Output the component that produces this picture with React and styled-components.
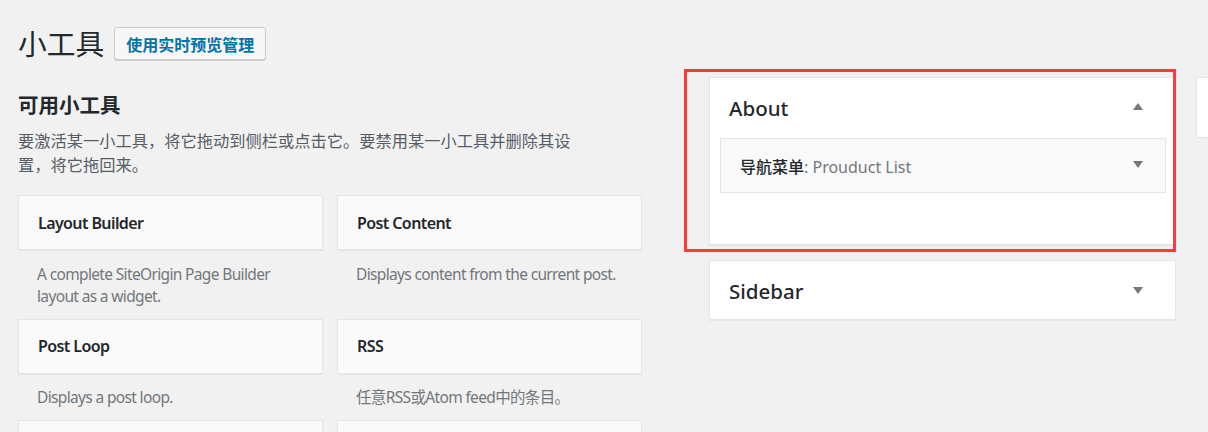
import React from "react";
import styled, { createGlobalStyle } from "styled-components";

const GlobalStyle = createGlobalStyle`
  html, body {
    margin: 0;
    padding: 0;
    background: #f1f1f1;
    overflow: hidden;
  }
  body {
    font-family: "Noto Sans", "Noto Sans CJK SC", sans-serif;
    color: #23282d;
  }
`;

const Page = styled.div`
  width: 1208px;
  height: 432px;
  padding-left: 18px;
  box-sizing: border-box;
  overflow: hidden;
`;

const Header = styled.div`
  display: flex;
  align-items: center;
  gap: 10px;
  height: 33px;
  padding-top: 27px;
`;

const Title = styled.h1`
  margin: 0;
  font-size: 28.75px;
  font-weight: 400;
  line-height: 33px;
  color: #23282d;
`;

const PreviewButton = styled.button`
  height: 33px;
  padding: 0 11px;
  border: 1px solid #cccccc;
  border-radius: 3px;
  background: #f7f7f7;
  color: #0073aa;
  font-family: "Noto Sans CJK SC", sans-serif;
  font-size: 16px;
  font-weight: 700;
  box-shadow: 0 1px 0 #cccccc;
`;

const Columns = styled.div`
  display: flex;
  align-items: flex-start;
`;

const LeftColumn = styled.div`
  width: 624px;
  flex-shrink: 0;
`;

const SectionTitle = styled.h2`
  margin: 31px 0 0;
  font-size: 20.5px;
  font-weight: 700;
  line-height: 28px;
  color: #23282d;
`;

const Intro = styled.p`
  margin: 11px 0 0;
  max-width: 560px;
  font-size: 16.25px;
  line-height: 23.5px;
  color: #555d66;
`;

const WidgetGrid = styled.div`
  display: grid;
  grid-template-columns: 305px 305px;
  column-gap: 14px;
  margin-top: 18px;
`;

const WidgetItem = styled.div`
  display: flex;
  flex-direction: column;
`;

const WidgetCard = styled.div`
  height: 53px;
  display: flex;
  align-items: center;
  padding-left: 19px;
  border: 1px solid #e5e5e5;
  background: #fafafa;
  box-shadow: 0 1px 1px rgba(0, 0, 0, 0.04);
  font-size: 16px;
  font-weight: 600;
  letter-spacing: -0.6px;
  color: #23282d;
`;

const WidgetDesc = styled.div`
  padding: 12.5px 19px 11px 19px;
  font-size: 15.5px;
  line-height: 22.5px;
  letter-spacing: -0.65px;
  color: #72777c;
  min-height: 22.5px;
`;

const RightArea = styled.div`
  display: flex;
  gap: 20px;
  margin-left: 67px;
  margin-top: 17px;
`;

const SidebarColumn = styled.div`
  width: 467px;
  flex-shrink: 0;
  display: flex;
  flex-direction: column;
  gap: 15px;
`;

const SidebarPanel = styled.div`
  position: relative;
  background: #ffffff;
  border: 1px solid #e5e5e5;
  box-shadow: 0 1px 1px rgba(0, 0, 0, 0.04);
  padding-bottom: ${(p) => (p.$open ? "51px" : "0")};
`;

const SidebarHeader = styled.div`
  height: 58px;
  display: flex;
  align-items: center;
  justify-content: space-between;
  padding: 2px 32px 0 19px;
  box-sizing: border-box;
`;

const SidebarName = styled.h2`
  margin: 0;
  font-size: 20.5px;
  font-weight: 500;
  color: #23282d;
`;

const Arrow = styled.span`
  width: 0;
  height: 0;
  border-left: 5px solid transparent;
  border-right: 5px solid transparent;
  ${(p) =>
    p.$up
      ? "border-bottom: 7px solid #72777c;"
      : "border-top: 7px solid #72777c;"}
  margin-top: ${(p) => (p.$up ? "-4px" : "-2px")};
`;

const InnerWidget = styled.div`
  margin: 2px 9px 0 10px;
  height: 53px;
  display: flex;
  align-items: center;
  justify-content: space-between;
  padding: 0 22px 0 19px;
  border: 1px solid #e5e5e5;
  background: #f9f9f9;
  font-size: 16px;
`;

const InnerTitle = styled.span`
  font-family: "Noto Sans CJK SC", sans-serif;
  font-weight: 500;
  color: #23282d;
`;

const InnerSub = styled.span`
  color: #72777c;
`;

const Highlight = styled.div`
  position: absolute;
  left: -26px;
  top: -9px;
  width: 492px;
  height: 183px;
  box-sizing: border-box;
  border: 3px solid #ff3a3a;
  pointer-events: none;
`;

const NextColumn = styled.div`
  width: 300px;
  flex-shrink: 0;
`;

const StubPanel = styled.div`
  height: 59px;
  background: #ffffff;
  border: 1px solid #e5e5e5;
`;

// the last row is cut off by the window, so its cards show no text
const widgets = [
  {
    name: "Layout Builder",
    desc: "A complete SiteOrigin Page Builder layout as a widget.",
  },
  { name: "Post Content", desc: "Displays content from the current post." },
  { name: "Post Loop", desc: "Displays a post loop." },
  { name: "RSS", desc: "任意RSS或Atom feed中的条目。" },
  { name: "", desc: "" },
  { name: "", desc: "" },
];

export default function App() {
  return (
    <>
      <GlobalStyle />
      <Page>
        <Header>
          <Title>小工具</Title>
          <PreviewButton>使用实时预览管理</PreviewButton>
        </Header>
        <Columns>
          <LeftColumn>
            <SectionTitle>可用小工具</SectionTitle>
            <Intro>
              要激活某一小工具，将它拖动到侧栏或点击它。要禁用某一小工具并删除其设置，将它拖回来。
            </Intro>
            <WidgetGrid>
              {widgets.map((w, i) => (
                <WidgetItem key={i}>
                  <WidgetCard>{w.name}</WidgetCard>
                  <WidgetDesc>{w.desc}</WidgetDesc>
                </WidgetItem>
              ))}
            </WidgetGrid>
          </LeftColumn>
          <RightArea>
            <SidebarColumn>
              <SidebarPanel $open>
                <SidebarHeader>
                  <SidebarName>About</SidebarName>
                  <Arrow $up />
                </SidebarHeader>
                <InnerWidget>
                  <span>
                    <InnerTitle>导航菜单</InnerTitle>
                    <InnerSub>: Prouduct List</InnerSub>
                  </span>
                  <Arrow />
                </InnerWidget>
                <Highlight />
              </SidebarPanel>
              <SidebarPanel>
                <SidebarHeader>
                  <SidebarName>Sidebar</SidebarName>
                  <Arrow />
                </SidebarHeader>
              </SidebarPanel>
            </SidebarColumn>
            <NextColumn>
              <StubPanel />
            </NextColumn>
          </RightArea>
        </Columns>
      </Page>
    </>
  );
}
